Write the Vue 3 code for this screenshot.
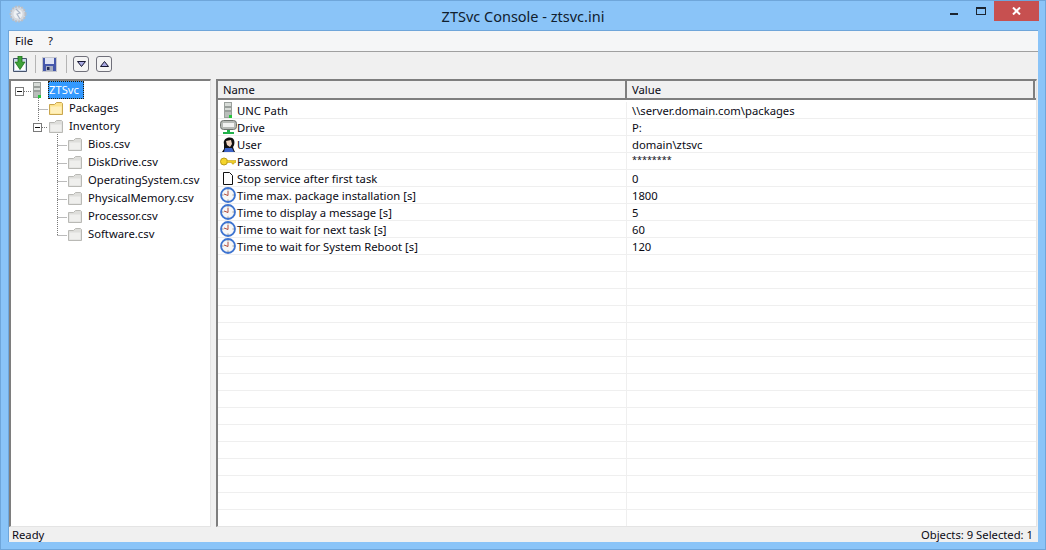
<script setup>
const tree = [
  { label: 'ZTSvc', icon: 'server', level: 0, selected: true, toggle: true },
  { label: 'Packages', icon: 'folder', level: 1 },
  { label: 'Inventory', icon: 'gray', level: 1, toggle: true },
  { label: 'Bios.csv', icon: 'gray', level: 2 },
  { label: 'DiskDrive.csv', icon: 'gray', level: 2 },
  { label: 'OperatingSystem.csv', icon: 'gray', level: 2 },
  { label: 'PhysicalMemory.csv', icon: 'gray', level: 2 },
  { label: 'Processor.csv', icon: 'gray', level: 2 },
  { label: 'Software.csv', icon: 'gray', level: 2 },
]
const rows = [
  { name: 'UNC Path', value: '\\\\server.domain.com\\packages', icon: 'server' },
  { name: 'Drive', value: 'P:', icon: 'drive' },
  { name: 'User', value: 'domain\\ztsvc', icon: 'user' },
  { name: 'Password', value: '********', icon: 'key' },
  { name: 'Stop service after first task', value: '0', icon: 'doc' },
  { name: 'Time max. package installation [s]', value: '1800', icon: 'clock' },
  { name: 'Time to display a message [s]', value: '5', icon: 'clock' },
  { name: 'Time to wait for next task [s]', value: '60', icon: 'clock' },
  { name: 'Time to wait for System Reboot [s]', value: '120', icon: 'clock' },
]
const emptyRows = Array.from({ length: 16 }, (_, i) => i)
</script>

<template>
  <div class="window">
    <div class="titlebar">
      <svg class="appicon" width="18" height="18" viewBox="0 0 18 18">
        <circle cx="9" cy="9" r="7.5" fill="#d4d8de" stroke="#b9bec6" stroke-dasharray="2 1.2" stroke-width="2"/>
        <circle cx="9" cy="9" r="4.5" fill="#eef1f4"/>
        <path d="M7 4l4 4-3 1 3 5" fill="none" stroke="#a9b6c8" stroke-width="1.2"/>
      </svg>
      <div class="title">ZTSvc Console - ztsvc.ini</div>
      <div class="controls">
        <span class="ctl"><i class="min"></i></span>
        <span class="ctl"><i class="max"></i></span>
        <span class="close">
          <svg width="9" height="8" viewBox="0 0 9 8"><path d="M1 0.5l7 7M8 0.5l-7 7" stroke="#fff" stroke-width="2" fill="none"/></svg>
        </span>
      </div>
    </div>

    <div class="client">
      <div class="menubar">
        <span class="menu">File</span>
        <span class="menu q">?</span>
      </div>
      <div class="toolbar">
        <svg class="tool" width="14" height="16" viewBox="0 0 14 16">
          <path d="M.5 2.500h13v13H.5z" fill="#c9d6ea" stroke="#46536c"/>
          <path d="M2 5h10v9H2z" fill="#fff"/>
          <path d="M5 0h4v6h3l-5 7.500L2 6h3z" fill="#3fa33a" stroke="#1c6d1c" stroke-width=".8"/>
        </svg>
        <i class="tsep first"></i>
        <svg class="tool" width="15" height="15" viewBox="0 0 15 15">
          <path d="M0 0h15v15H0z" fill="#c3c5cc"/>
          <path d="M1 1h13v13H1z" fill="#4557ab"/>
          <path d="M3 1h9v6H3z" fill="#dfe3f4"/>
          <path d="M4 9h7v5H4z" fill="#a7aec2"/>
          <path d="M5 10h2.500v3H5z" fill="#222a55"/>
        </svg>
        <i class="tsep"></i>
        <span class="round">
          <svg width="9" height="6" viewBox="0 0 9 6"><path d="M.5.500h8L4.500 5.500z" fill="#a9a9e2" stroke="#15152e"/></svg>
        </span>
        <span class="round">
          <svg width="9" height="6" viewBox="0 0 9 6"><path d="M.5 5.500h8L4.500 .5z" fill="#a9a9e2" stroke="#15152e"/></svg>
        </span>
      </div>

      <div class="panes">
        <div class="tree">
          <svg class="lines" width="100" height="180" viewBox="0 0 100 180">
            <g stroke="#777" stroke-dasharray="1 1" fill="none">
              <path d="M12 11.500h10M28.500 18v24M28.500 29.500H38M32 47.500h6M47.500 52v103.500M47.500 65.500H57M47.500 83.500H57M47.500 101.500H57M47.500 119.500H57M47.500 137.500H57M47.500 155.500H57"/>
            </g>
          </svg>
          <div v-for="node in tree" :key="node.label" class="node" :class="'lvl' + node.level">
            <span v-if="node.toggle" class="toggle"><i></i></span>
            <svg v-if="node.icon === 'server'" class="nicon srv" width="8" height="16" viewBox="0 0 8 16">
              <path d="M0 0h8v16H0z" fill="#9aa09c"/>
              <path d="M1 1h6v3H1zM1 6h6v2H1z" fill="#d8dcd8"/>
              <path d="M1 10h6v5H1z" fill="#b9bebb"/>
              <path d="M5 13h3v3H5z" fill="#27c53c"/>
            </svg>
            <svg v-else class="nicon" width="14" height="13" viewBox="0 0 14 13">
              <path d="M.5 12.500v-10h5l2-2h5l1 1v11z" :fill="node.icon === 'folder' ? '#fde38d' : '#dededb'" :stroke="node.icon === 'folder' ? '#c9a64f' : '#b9b9b5'"/>
              <path d="M1.500 4.500h11v7h-11z" :fill="node.icon === 'folder' ? '#fff0bd' : '#efefed'"/>
            </svg>
            <span class="label" :class="{ selected: node.selected }">{{ node.label }}</span>
          </div>
        </div>

        <div class="list">
          <div class="header">
            <div class="hcell name">Name</div>
            <div class="hcell value">Value</div>
            <div class="hend"></div>
          </div>
          <div class="body">
            <div v-for="row in rows" :key="row.name" class="row">
              <div class="cell name">
                <span class="ricon">
                  <svg v-if="row.icon === 'server'" width="8" height="16" viewBox="0 0 8 16">
                    <path d="M0 0h8v16H0z" fill="#9aa09c"/>
                    <path d="M1 1h6v3H1zM1 6h6v2H1z" fill="#d8dcd8"/>
                    <path d="M1 10h6v5H1z" fill="#b9bebb"/>
                    <path d="M5 13h3v3H5z" fill="#27c53c"/>
                  </svg>
                  <svg v-else-if="row.icon === 'drive'" width="17" height="15" viewBox="0 0 17 15">
                    <rect x=".5" y=".5" width="16" height="9" rx="3" fill="#b5b9b5" stroke="#6e726e"/>
                    <path d="M3 3h11v4H3z" fill="#f1f2f1"/>
                    <path d="M7 10h3v2h4v2H3v-2h4z" fill="#21b24a"/>
                  </svg>
                  <svg v-else-if="row.icon === 'user'" width="13" height="16" viewBox="0 0 13 16">
                    <path d="M2 8C0 2 10-1 12 4c1 3 0 6-1 7l1 3 1 2H0l2-3z" fill="#111"/>
                    <path d="M4 5l5-1 1 4-2 3-3-2z" fill="#f0d4c0"/>
                    <path d="M3 12h7l2 4H2z" fill="#3c63c8"/>
                  </svg>
                  <svg v-else-if="row.icon === 'key'" width="16" height="9" viewBox="0 0 16 9">
                    <ellipse cx="4" cy="4.500" rx="3.500" ry="3.500" fill="#f4d52c" stroke="#b99a15"/>
                    <path d="M7 3.500h9v2h-2v1.500h-2V5.500H7z" fill="#f0cf28" stroke="#c3a31a" stroke-width=".6"/>
                  </svg>
                  <svg v-else-if="row.icon === 'doc'" width="10" height="13" viewBox="0 0 10 13">
                    <path d="M.5.500h6l3 3v9H.5z" fill="#fff" stroke="#111"/>
                  </svg>
                  <svg v-else width="16" height="16" viewBox="0 0 16 16">
                    <circle cx="8" cy="8" r="7" fill="#f7f7f7" stroke="#3e74d0" stroke-width="1.800"/>
                    <path d="M8 4v4.500L4 7" fill="none" stroke="#b04a3c" stroke-width="1"/>
                    <path d="M8 2v1.500M8 12.500V14M2 8h1.500M12.500 8H14" stroke="#777" stroke-width=".8"/>
                  </svg>
                </span>
                <span class="rname">{{ row.name }}</span>
              </div>
              <div class="cell value" :class="{ secret: row.icon === 'key' }">{{ row.value }}</div>
            </div>
            <div v-for="i in emptyRows" :key="i" class="row empty">
              <div class="cell name"></div>
              <div class="cell value"></div>
            </div>
          </div>
        </div>
      </div>

      <div class="status">
        <span>Ready</span>
        <span>Objects: 9 Selected: 1</span>
      </div>
    </div>
  </div>
</template>

<style>
html, body { margin: 0; padding: 0; overflow: hidden; }
</style>

<style scoped>
.window {
  width: 1046px;
  height: 550px;
  box-sizing: border-box;
  background: #8ac4f8;
  border: 1px solid #6fa6da;
  padding: 0 7px 7px;
  display: flex;
  flex-direction: column;
  font-family: "Noto Sans", "DejaVu Sans", sans-serif;
  font-size: 11.25px;
  color: #0a0a14;
}
.titlebar {
  height: 29px;
  flex: none;
  display: flex;
  align-items: center;
  position: relative;
}
.appicon { margin: -3px 0 0 1px; }
.title {
  position: absolute;
  left: 0;
  right: 0;
  top: 6px;
  text-align: center;
  font-size: 14.5px;
  line-height: 18px;
  color: #10202f;
}
.controls {
  margin-left: auto;
  height: 100%;
  display: flex;
  align-self: flex-start;
  margin-right: -1px;
}
.ctl {
  width: 26px;
  height: 20px;
  position: relative;
}
.min {
  position: absolute;
  left: 8px;
  top: 12px;
  width: 8px;
  height: 2px;
  background: #1c2530;
}
.max {
  position: absolute;
  left: 8px;
  top: 6px;
  width: 8px;
  height: 5px;
  border: 1px solid #1c2530;
  border-top-width: 2px;
}
.close {
  width: 45px;
  height: 20px;
  background: #c75050;
  display: flex;
  align-items: center;
  justify-content: center;
}
.client {
  flex: 1;
  min-height: 0;
  background: #f0f0f0;
  border: 1px solid #6fa6da;
  border-bottom: none;
  border-right: none;
  display: flex;
  flex-direction: column;
}
.menubar {
  height: 20px;
  flex: none;
  box-sizing: border-box;
  padding: 0 0 1px 6px;
  height: 21px;
  background: #f5f6f7;
  border-bottom: 1px solid #a0a0a0;
  display: flex;
  align-items: center;
  gap: 15px;
}
.toolbar {
  height: 27px;
  flex: none;
  box-sizing: border-box;
  padding: 0 0 3px 4px;
  display: flex;
  align-items: center;
}
.tool { flex: none; }
.tsep {
  width: 1px;
  height: 18px;
  background: #b4b4b4;
  margin: 0 6px 0 9px;
}
.tsep.first { margin-left: 8px; }
.round {
  width: 16px;
  height: 16px;
  box-sizing: border-box;
  border: 1px solid #70707a;
  border-radius: 3px;
  display: flex;
  align-items: center;
  justify-content: center;
  margin-right: 7px;
  background: #f4f4f4;
}
.panes {
  flex: 1;
  min-height: 0;
  display: flex;
  gap: 5px;
}
.tree {
  width: 202px;
  flex: none;
  box-sizing: border-box;
  position: relative;
  background: #fff;
  border-left: 2px solid #7e7e7e;
  border-top: 2px solid #7e7e7e;
  border-right: 1px solid #e4e4e4;
  border-bottom: 1px solid #e4e4e4;
}
.lines {
  position: absolute;
  left: -1px;
  top: -1px;
  pointer-events: none;
}
.node {
  height: 18px;
  display: flex;
  align-items: center;
  position: relative;
}
.lvl0 { padding-left: 22px; }
.lvl1 { padding-left: 38px; }
.lvl2 { padding-left: 57px; }
.toggle {
  position: absolute;
  top: 6px;
  width: 9px;
  height: 9px;
  box-sizing: border-box;
  border: 1px solid #7a7a7a;
  background: #fff;
  display: flex;
  align-items: center;
  justify-content: center;
}
.toggle i {
  width: 5px;
  height: 1px;
  background: #111;
}
.lvl0 .toggle { left: 4px; }
.lvl1 .toggle { left: 22px; }
.nicon { flex: none; }
.label {
  margin-left: 5px;
  padding: 0 2px 0 1px;
  line-height: 18px;
  height: 18px;
}
.srv + .label { margin-left: 7px; }
.selected {
  background: #3399ff;
  color: #fff;
  padding-right: 5px;
  outline: 1px dotted #2a1a00;
  outline-offset: -1px;
}
.list {
  flex: 1;
  min-width: 0;
  margin-right: 1px;
  background: #fff;
  border-left: 2px solid #7e7e7e;
  border-top: 2px solid #7e7e7e;
  border-right: 1px solid #e4e4e4;
  border-bottom: 1px solid #e4e4e4;
  display: flex;
  flex-direction: column;
  overflow: hidden;
}
.header {
  height: 17px;
  flex: none;
  display: flex;
  background: #f0f0f0;
  border-bottom: 2px solid #7e7e7e;
  margin-bottom: 2px;
}
.hcell {
  box-sizing: border-box;
  line-height: 18px;
  padding-left: 5px;
}
.hcell.name {
  width: 409px;
  border-right: 2px solid #7e7e7e;
}
.hcell.value {
  flex: 1;
  border-right: 2px solid #7e7e7e;
}
.hend { width: 1px; }
.body {
  flex: 1;
  min-height: 0;
  overflow: hidden;
}
.row {
  height: 17px;
  box-sizing: border-box;
  border-bottom: 1px solid #efefef;
  display: flex;
}
.cell {
  height: 16px;
  line-height: 18px;
  white-space: nowrap;
  box-sizing: border-box;
}
.cell.name {
  width: 409px;
  border-right: 1px solid #efefef;
  display: flex;
  align-items: center;
}
.cell.value {
  flex: 1;
  padding-left: 5px;
}
.cell.value.secret {
  font-size: 9px;
  line-height: 14px;
}
.rname { line-height: 18px; height: 16px; }
.ricon {
  width: 19px;
  height: 16px;
  flex: none;
  display: flex;
  align-items: center;
  justify-content: center;
  padding-left: 1px;
  box-sizing: border-box;
}
.status {
  height: 15px;
  flex: none;
  display: flex;
  justify-content: space-between;
  align-items: center;
  padding: 0 5px 0 3px;
}
</style>
